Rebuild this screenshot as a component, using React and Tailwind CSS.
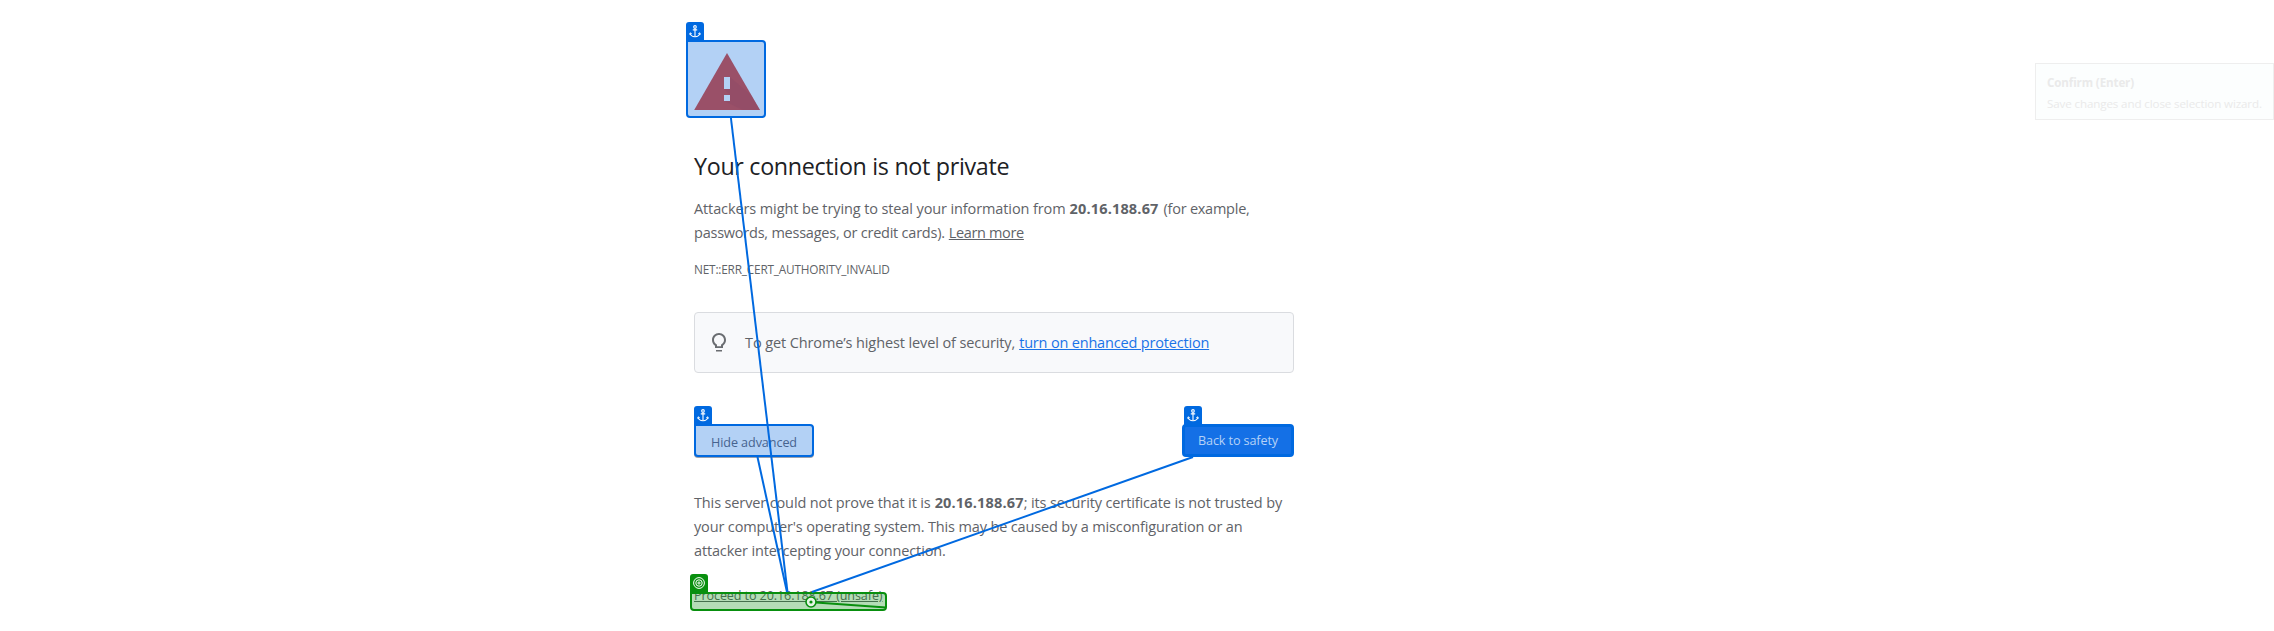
const ANCHOR_BLUE = "#0069e0";

function AnchorTag({ className }) {
  return (
    <div className={`absolute flex h-[20px] w-[18px] justify-center rounded-t-[3px] bg-[#0069e0] pt-[3px] ${className}`}>
      <svg width="12" height="13" viewBox="0 0 12 13" fill="none" stroke="#ffffff" strokeWidth="1.1">
        <circle cx="6" cy="1.9" r="1.3" />
        <path d="M6 3.2V11.6M3.8 4.9H8.2" />
        <path d="M1.2 8.2C1.5 10.4 3.4 11.6 6 11.8C8.6 11.6 10.5 10.4 10.8 8.2" />
        <path d="M0.6 9.6L1.2 7.8L2.8 8.8M11.4 9.6L10.8 7.8L9.2 8.8" strokeWidth="0.9" />
      </svg>
    </div>
  );
}

function WarningIcon() {
  return (
    <svg className="block" width="72" height="72" viewBox="0 0 72 72">
      <path d="M0.2 64H66L33 7Z" fill="#9a5068" />
      <path d="M36 31L57 49L66 64H49L30 55H36V49L30 43H36Z" fill="#8f4a66" opacity="0.45" />
      <path d="M30 31H36V43H30ZM30 49H36V55H30Z" fill="#b3d1f5" />
    </svg>
  );
}

function BulbIcon() {
  return (
    <svg width="24" height="24" viewBox="0 0 24 24" fill="#6a6d71">
      <path d="M9 20.5h6v-1.6H9v1.6zM12 2C8.1 2 5 5.1 5 9c0 2.4 1.2 4.5 3 5.7V17h8v-2.3c1.8-1.3 3-3.4 3-5.7 0-3.9-3.1-7-7-7zm2.8 11.1-.8.6V15.2h-4v-1.5l-.8-.6C7.8 12.2 7 10.6 7 9c0-2.8 2.2-5 5-5s5 2.2 5 5c0 1.6-.8 3.2-2.2 4.1z" />
    </svg>
  );
}

function Links() {
  return (
    <svg className="pointer-events-none absolute left-0 top-0" width="2274" height="631" viewBox="0 0 2274 631" fill="none">
      <g stroke={ANCHOR_BLUE} strokeWidth="2">
        <path d="M730.8 117L787.5 592" />
        <path d="M757.5 457L787 592" />
        <path d="M1193 457L812 592" />
      </g>
      <path d="M816 602.5L886 607.5" stroke="#088f0e" strokeWidth="2" />
      <circle cx="811" cy="602" r="5" fill="#e6f4e6" stroke="#088f0e" strokeWidth="1.6" />
      <circle cx="811" cy="602" r="1.6" fill="#088f0e" />
    </svg>
  );
}

export default function App() {
  return (
    <div className="relative h-[631px] w-[2274px] overflow-hidden bg-white font-['Open_Sans',sans-serif] text-[#5f6368]">
      <main className="flex w-[1294px] flex-col pl-[694px] pt-[46px]">
        <div className="relative h-[72px] w-[72px]">
          <div className="absolute -left-[8px] -top-[6px] h-[78px] w-[80px] rounded-[4px] rounded-tl-none border-2 border-[#0069e0] bg-[#b3d1f5]" />
          <div className="relative">
            <WarningIcon />
          </div>
          <AnchorTag className="-left-[8px] -top-[24px]" />
        </div>

        <h1 className="mt-[32px] h-[32px] whitespace-nowrap text-[23.3px] leading-[32px] tracking-[-0.32px] text-[#202124]">
          Your connection is not private
        </h1>

        <div className="mt-[15px] whitespace-nowrap text-[14.5px] leading-[24px]">
          <div className="flex h-[24px] gap-1">
            <span className="tracking-[-0.11px]">Attackers might be trying to steal your information from</span>
            <strong className="font-bold tracking-[0.17px]">20.16.188.67</strong>
            <span className="ml-px tracking-[-0.25px]">(for example,</span>
          </div>
          <div className="flex h-[24px] gap-1">
            <span className="tracking-[-0.23px]">passwords, messages, or credit cards).</span>
            <a className="tracking-[-0.35px] underline">Learn more</a>
          </div>
        </div>

        <div className="mt-[15px] h-[18px] whitespace-nowrap text-[11.8px] leading-[18px] tracking-[-0.18px]">
          NET::ERR_CERT_AUTHORITY_INVALID
        </div>

        <div className="mt-[34px] flex h-[61px] items-center rounded-[4px] border border-[#dadce0] bg-[#f8f9fb] pl-[12px]">
          <BulbIcon />
          <div className="ml-[14px] flex gap-[4px] whitespace-nowrap text-[14.5px] leading-[24px]">
            <span className="tracking-[-0.11px]">To get Chrome’s highest level of security,</span>
            <a className="tracking-[-0.18px] text-[#1a73e8] underline">turn on enhanced protection</a>
          </div>
        </div>

        <div className="mt-[51px] flex h-[33px] justify-between whitespace-nowrap text-[12.6px]">
          <div className="relative">
            <button className="flex h-[33px] w-[120px] items-center justify-center rounded-[4px] rounded-tl-none border-2 border-[#0069e0] bg-[#b3d1f5] pt-[5px] tracking-[-0.08px] text-[#46638f] shadow-[0_1px_0_0_#9aa0ab]">
              Hide advanced
            </button>
            <AnchorTag className="-top-[18px] left-0" />
          </div>
          <div className="relative">
            <button className="flex h-[33px] w-[112px] items-center justify-center rounded-[4px] border-[3px] border-[#0069e0] bg-[#1470e6] pt-[2px] tracking-[-0.11px] text-[#b5d2f7]">
              Back to safety
            </button>
            <AnchorTag className="-top-[18px] left-[2px]" />
          </div>
        </div>

        <div className="mt-[34px] whitespace-nowrap text-[14.5px] leading-[24px]">
          <div className="flex h-[24px]">
            <span className="tracking-[-0.13px]">This server could not prove that it is</span>
            <strong className="ml-1 font-bold tracking-[0.17px]">20.16.188.67</strong>
            <span className="tracking-[-0.13px]">; its security certificate is not trusted by</span>
          </div>
          <div className="h-[24px] tracking-[-0.147px]">
            your computer's operating system. This may be caused by a misconfiguration or an
          </div>
          <div className="h-[24px] tracking-[-0.15px]">attacker intercepting your connection.</div>
        </div>

        <div className="relative mt-[28px] h-[20px]">
          <a className="-mt-[5px] block h-[20px] whitespace-nowrap text-[12.6px] leading-[20px] tracking-[-0.11px] underline">
            Proceed to 20.16.188.67 (unsafe)
          </a>
        </div>
        <div className="relative -mt-[15px] h-[19px]">
          <div className="absolute -left-[4px] -top-[4px] h-[19px] w-[197px] rounded-[4px] rounded-tl-none border-2 border-[#088f0e] bg-[#088f0e]/30" />
          <div className="absolute -left-[4px] -top-[22px] flex h-[20px] w-[18px] justify-center rounded-t-[3px] bg-[#088f0e] pt-[3px]">
            <svg width="12" height="12" viewBox="0 0 12 12" fill="none" stroke="#ffffff">
              <circle cx="6" cy="6" r="5.4" />
              <circle cx="6" cy="6" r="3.2" />
              <circle cx="6" cy="6" r="1.1" />
            </svg>
          </div>
        </div>
      </main>

      <Links />

      <div className="absolute left-[2035px] top-[63px] h-[57px] w-[239px] whitespace-nowrap border border-[#eeeeee] bg-[#fcfefe] pl-[11px] pt-[8px] text-[11.6px] text-[#eaeaea]">
        <div className="h-[21px] leading-[21px] font-bold tracking-[-0.13px]">Confirm (Enter)</div>
        <div className="h-[21px] leading-[21px] tracking-[-0.12px]">Save changes and close selection wizard.</div>
      </div>
    </div>
  );
}
